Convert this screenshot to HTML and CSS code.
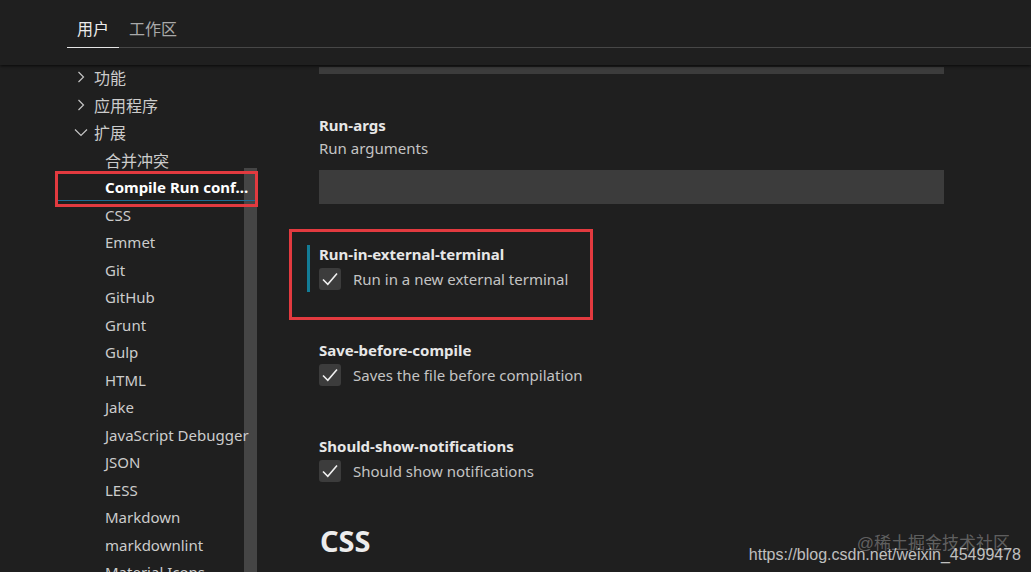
FILE: index.html
```html
<!DOCTYPE html>
<html lang="zh-CN">
<head>
<meta charset="utf-8">
<title>Settings</title>
<link rel="stylesheet" href="styles.css">
</head>
<body>
<div class="app">
  <header class="header">
    <div class="tabs">
      <div class="tab active">用户</div>
      <div class="tab">工作区</div>
    </div>
  </header>
  <div class="main">
    <nav class="tree">
      <div class="scrollbar"></div>
      <div class="row top"><svg class="chev" viewBox="0 0 16 16"><path d="M5.5 3 L10.5 8 L5.5 13"/></svg><span>功能</span></div>
      <div class="row top"><svg class="chev" viewBox="0 0 16 16"><path d="M5.5 3 L10.5 8 L5.5 13"/></svg><span>应用程序</span></div>
      <div class="row top"><svg class="chev" viewBox="0 0 16 16"><path d="M2 5.5 L8 11.5 L14 5.5"/></svg><span>扩展</span></div>
      <div class="row child cjk">合并冲突</div>
      <div class="row child selected">Compile Run conf...</div>
      <div class="row child">CSS</div>
      <div class="row child">Emmet</div>
      <div class="row child">Git</div>
      <div class="row child">GitHub</div>
      <div class="row child">Grunt</div>
      <div class="row child">Gulp</div>
      <div class="row child">HTML</div>
      <div class="row child">Jake</div>
      <div class="row child">JavaScript Debugger</div>
      <div class="row child">JSON</div>
      <div class="row child">LESS</div>
      <div class="row child">Markdown</div>
      <div class="row child">markdownlint</div>
      <div class="row child">Material Icons</div>
    </nav>
    <main class="content">
      <div class="peek"></div>
      <section class="setting">
        <div class="title">Run-args</div>
        <div class="desc">Run arguments</div>
        <div class="input"></div>
      </section>
      <section class="setting focused">
        <div class="title">Run-in-external-terminal</div>
        <label class="check-row"><span class="checkbox"><svg viewBox="0 0 22 22"><path d="M4 11.5 L8.8 16.3 L18 5.5"/></svg></span><span class="desc">Run in a new external terminal</span></label>
      </section>
      <section class="setting">
        <div class="title">Save-before-compile</div>
        <label class="check-row"><span class="checkbox"><svg viewBox="0 0 22 22"><path d="M4 11.5 L8.8 16.3 L18 5.5"/></svg></span><span class="desc">Saves the file before compilation</span></label>
      </section>
      <section class="setting">
        <div class="title">Should-show-notifications</div>
        <label class="check-row"><span class="checkbox"><svg viewBox="0 0 22 22"><path d="M4 11.5 L8.8 16.3 L18 5.5"/></svg></span><span class="desc">Should show notifications</span></label>
      </section>
      <h2 class="group">CSS</h2>
    </main>
  </div>
  <div class="annot annot-tree"></div>
  <div class="annot annot-setting"></div>
  <div class="watermark">
    <div class="wm-juejin">@稀土掘金技术社区</div>
    <div class="wm-csdn">https://blog.csdn.net/weixin_45499478</div>
  </div>
</div>
</body>
</html>
```
FILE: styles.css
```css
html, body {
  margin: 0;
  padding: 0;
  background: #1f1f1f;
}
body {
  font-family: "Noto Sans", "Noto Sans CJK SC", sans-serif;
  font-size: 15px;
  color: #cccccc;
  overflow: hidden;
}
.app {
  position: relative;
  width: 1031px;
  height: 572px;
  overflow: hidden;
}
.header {
  position: relative;
  z-index: 2;
  height: 65px;
  background: #1f1f1f;
  box-shadow: 0 1px 3px rgba(0, 0, 0, 0.75);
}
.tabs {
  margin-left: 67px;
  display: flex;
  height: 47px;
  border-bottom: 1px solid #474747;
}
.tab {
  padding: 16px 10px 0;
  height: 31px;
  line-height: 26px;
  font-size: 16px;
  color: #a9a9a9;
}
.tab.active {
  color: #ececec;
  border-bottom: 1px solid #e5e5e5;
}
.main {
  display: flex;
}
.tree {
  position: relative;
  width: 257px;
  height: 508px;
  margin-top: -1.5px;
  flex: none;
}
.row {
  position: relative;
  z-index: 1;
  height: 27.5px;
  display: flex;
  align-items: center;
  white-space: nowrap;
  font-size: 15px;
  color: #cccccc;
}
.row.top {
  padding-left: 73px;
  gap: 5px;
  font-size: 16px;
}
.chev {
  width: 16px;
  height: 16px;
  fill: none;
  stroke: #c5c5c5;
  stroke-width: 1.2;
}
.row.child {
  padding-left: 105px;
}
.row.cjk {
  font-size: 16px;
}
.row.selected {
  margin-left: 57px;
  margin-right: 2px;
  padding-left: 48px;
  box-sizing: border-box;
  font-weight: 700;
  color: #ffffff;
  border-bottom: 1px solid #1f6b95;
}
.scrollbar {
  position: absolute;
  left: 244px;
  top: 104.5px;
  width: 13px;
  bottom: 0;
  background: #454545;
}
.content {
  margin-left: 62px;
  width: 625px;
}
.peek {
  margin-top: 2px;
  height: 7px;
  background: #3c3c3c;
  margin-bottom: 24.5px;
}
.setting {
  position: relative;
  padding: 15px 0 23.5px;
}
.title {
  height: 23px;
  line-height: 23px;
  font-weight: 700;
  color: #e7e7e7;
}
.desc {
  line-height: 23px;
  color: #c4c4c4;
}
.input {
  margin-top: 10.5px;
  height: 34px;
  background: #3c3c3c;
}
.check-row {
  margin-top: 2.5px;
  margin-bottom: 10px;
  display: flex;
  align-items: center;
  gap: 12px;
  height: 22px;
}
.checkbox {
  width: 22px;
  height: 22px;
  border-radius: 3px;
  background: #3c3c3c;
  flex: none;
}
.checkbox svg {
  width: 22px;
  height: 22px;
  display: block;
  fill: none;
  stroke: #f0f0f0;
  stroke-width: 1.6;
}
.setting.focused::before {
  content: "";
  position: absolute;
  left: -12px;
  top: 17.5px;
  width: 3px;
  height: 47px;
  background: #137c96;
}
.group {
  margin: 8.5px 0 0 1px;
  font-size: 29px;
  line-height: 34px;
  font-weight: 700;
  color: #ececec;
}
.annot {
  position: absolute;
  border: 3px solid #e23a3f;
  box-sizing: border-box;
  z-index: 5;
}
.annot-tree {
  left: 55px;
  top: 171px;
  width: 203px;
  height: 36px;
}
.annot-setting {
  left: 289px;
  top: 229px;
  width: 304px;
  height: 91px;
}
.watermark {
  position: absolute;
  right: 10px;
  bottom: 8px;
  z-index: 6;
  text-align: right;
  font-family: "Liberation Sans", "Noto Sans CJK SC", sans-serif;
}
.wm-juejin {
  font-size: 17px;
  line-height: 18px;
  color: rgba(255, 255, 255, 0.3);
  margin-right: 11px;
  margin-bottom: -7px;
}
.wm-csdn {
  font-size: 16px;
  line-height: 18px;
  color: rgba(255, 255, 255, 0.72);
}
```
